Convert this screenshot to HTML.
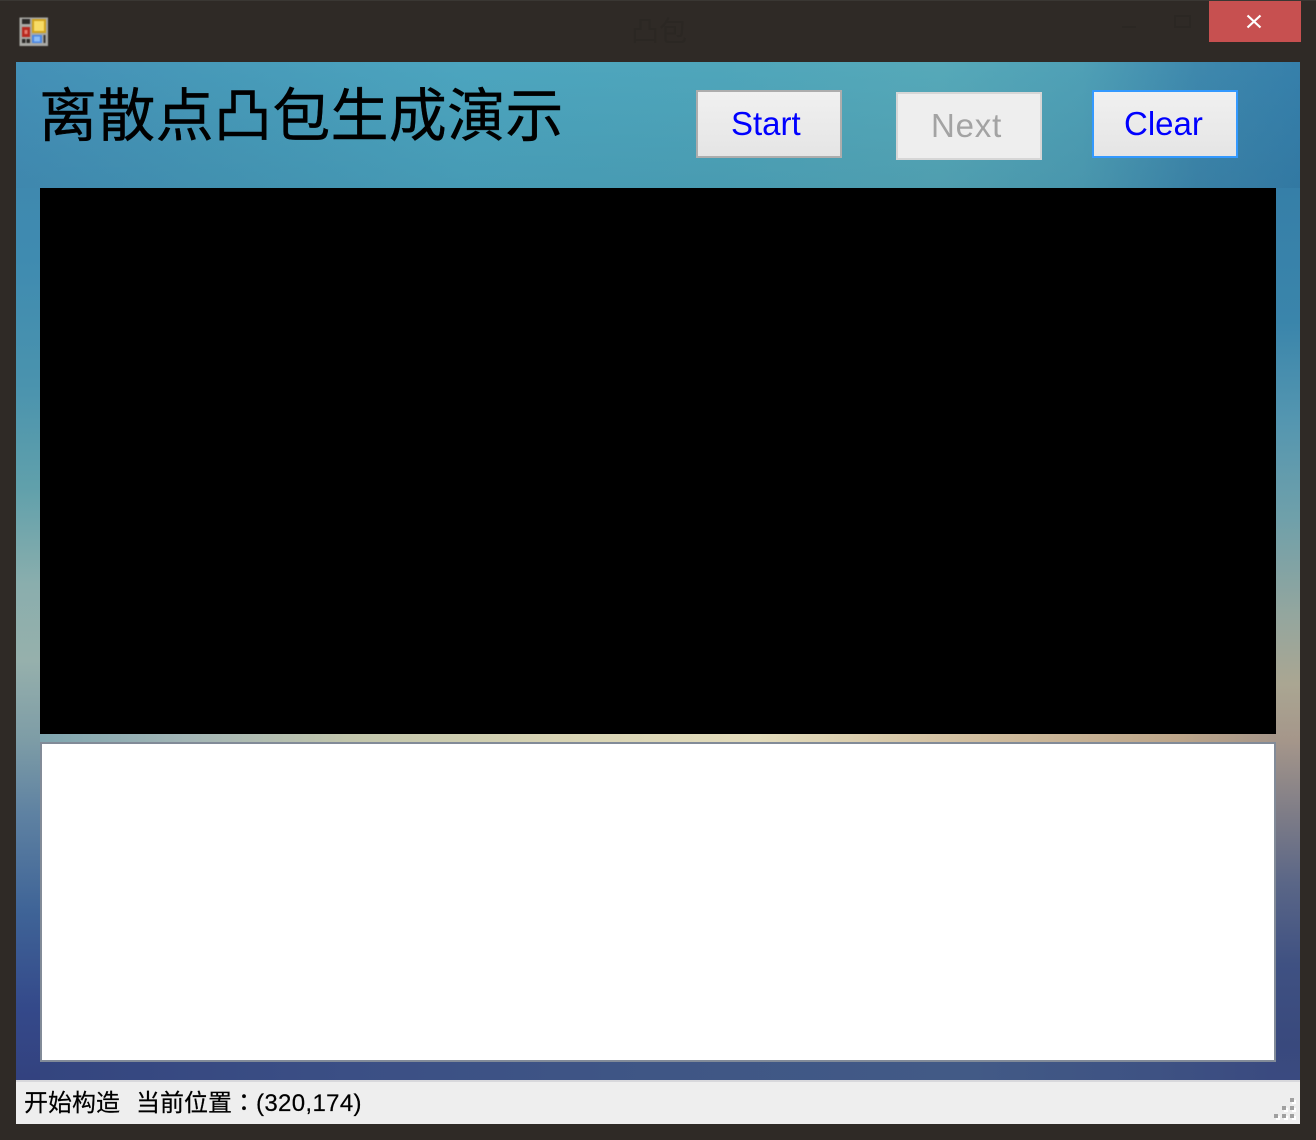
<!DOCTYPE html>
<html><head><meta charset="utf-8"><style>
html,body{margin:0;padding:0;width:1316px;height:1140px;overflow:hidden;background:#2f2a26}
div{position:absolute;box-sizing:border-box}
.btn{width:146px;height:68px;background:linear-gradient(#f0f0f0,#e5e5e5);border:2px solid #adadad}
.lbl{font:33px/36px "Liberation Sans",sans-serif;color:#0000ff;white-space:nowrap}
.st{font:24px/30px "Liberation Sans","Noto Sans CJK SC",sans-serif;color:#000;white-space:pre;-webkit-text-stroke:.2px #000}
</style></head><body>
<!-- title bar -->
<div style="left:0;top:0;width:1316px;height:1px;background:#3a3733"></div>
<svg style="position:absolute;left:19px;top:17px;filter:blur(.5px)" width="30" height="30" viewBox="0 0 30 30">
<rect x="0.5" y="0.5" width="28.5" height="28.5" fill="#a9a9a5"/>
<rect x="3" y="2" width="8" height="5" fill="#2c2a28"/>
<rect x="3" y="10" width="8" height="10" fill="#b8281f"/>
<rect x="5.5" y="13" width="3" height="4" fill="#e87c70"/>
<rect x="3" y="22" width="3.5" height="4" fill="#2c2a28"/><rect x="7.5" y="22" width="3.5" height="4" fill="#2c2a28"/>
<rect x="13" y="2" width="14" height="14" fill="#cfa21e"/>
<rect x="15" y="4" width="10" height="10" fill="#f8dc66"/>
<rect x="13" y="18" width="10" height="8" fill="#4a86e4"/>
<rect x="15" y="19.5" width="6" height="5" fill="#8cbcf6"/>
<rect x="24.5" y="18" width="2" height="8" fill="#3a3836"/>
</svg>
<div style="left:631px;top:16px;font:28px/32px 'Liberation Sans','Noto Sans CJK SC',sans-serif;color:#2b2723">凸包</div>
<div style="left:1122px;top:26px;width:14px;height:2px;background:#2b2723"></div>
<div style="left:1174px;top:15px;width:17px;height:13px;border:2px solid #2b2723"></div>
<div style="left:1209px;top:1px;width:92px;height:41px;background:#c75050"></div>
<svg style="position:absolute;left:1246px;top:14px" width="16" height="15" viewBox="0 0 16 15"><path d="M1.5 1.5L14.5 13.5M14.5 1.5L1.5 13.5" stroke="#fff" stroke-width="2.2" fill="none"/></svg>

<!-- client background -->
<div style="left:16px;top:62px;width:1284px;height:126px;background:linear-gradient(rgba(0,30,60,0),rgba(0,30,60,.08)),linear-gradient(90deg,#4490b7 0%,#479ab9 15%,#4ca5bf 35%,#4fa6bb 55%,#56a9b9 72%,#4fa0b6 83%,#3e88ad 92%,#3680ab 100%)"></div>
<div style="left:16px;top:188px;width:24px;height:892px;background:linear-gradient(#3f89af 0%,#3f8bb0 8%,#4a93ae 22%,#60a0ab 33.5%,#8aaead 44.5%,#96b0ac 53%,#7d9ca6 62%,#5f82a2 70%,#3f6497 81%,#34498a 92%,#33427f 100%)"></div>
<div style="left:1276px;top:188px;width:24px;height:892px;background:linear-gradient(#367fa8 0%,#3a85ab 15%,#5496b0 26%,#6fa0aa 37%,#94a69e 48%,#aaa692 55.6%,#a5968a 62%,#7f7d87 70%,#5a6687 78%,#3f5182 87%,#39497d 96%,#3a4a80 100%)"></div>
<div style="left:40px;top:734px;width:1236px;height:8px;background:linear-gradient(90deg,#7fa6b0 0%,#a3b6b6 12%,#c2c6ac 25%,#d8d4b4 42%,#e3dcbc 58%,#d2bfa0 75%,#bda68a 92%,#a5968a 100%)"></div>
<div style="left:40px;top:1062px;width:1236px;height:18px;background:linear-gradient(90deg,#34457f 0%,#3b4f85 25%,#3f5685 50%,#425a86 75%,#3e5283 90%,#3a4a80 100%)"></div>

<!-- title -->
<div style="left:39px;top:78px;width:540px;height:80px;font:58px/78px 'Liberation Sans','Noto Sans CJK SC',sans-serif;color:#000;white-space:nowrap;-webkit-text-stroke:.4px #000;letter-spacing:.3px">离散点凸包生成演示</div>

<!-- buttons -->
<div class="btn" style="left:696px;top:90px"></div>
<div class="lbl" style="left:731px;top:106px">Start</div>
<div class="btn" style="left:896px;top:92px;background:#eee;border-color:#d6d6d6"></div>
<div class="lbl" style="left:931px;top:108px;color:#a3a3a3;letter-spacing:.8px">Next</div>
<div class="btn" style="left:1092px;top:90px;border-color:#3399ff"></div>
<div class="lbl" style="left:1124px;top:106px">Clear</div>

<!-- canvas -->
<div style="left:40px;top:188px;width:1236px;height:546px;background:#000"></div>
<div style="left:40px;top:742px;width:1236px;height:320px;background:#fff;border:2px solid #828b98"></div>

<!-- status strip -->
<div style="left:16px;top:1080px;width:1284px;height:44px;background:#eeeeee;border-top:2px solid #d8d8dc"></div>
<div class="st" style="left:24px;top:1089px">开始构造</div>
<div class="st" style="left:136px;top:1089px">当前位置</div>
<div class="st" style="left:232px;top:1089px;font-family:'Liberation Sans','Noto Sans CJK TC',sans-serif">：</div>
<div class="st" style="left:256px;top:1089px;letter-spacing:.35px">(320,174)</div>
<svg style="position:absolute;left:1272px;top:1094px" width="28" height="30">
<g fill="#fff"><rect x="20" y="6" width="4" height="4"/><rect x="12" y="14" width="4" height="4"/><rect x="20" y="14" width="4" height="4"/><rect x="4" y="22" width="4" height="4"/><rect x="12" y="22" width="4" height="4"/><rect x="20" y="22" width="4" height="4"/></g>
<g fill="#a0a0a0"><rect x="18" y="4" width="4" height="4"/><rect x="10" y="12" width="4" height="4"/><rect x="18" y="12" width="4" height="4"/><rect x="2" y="20" width="4" height="4"/><rect x="10" y="20" width="4" height="4"/><rect x="18" y="20" width="4" height="4"/></g>
</svg>
</body></html>
